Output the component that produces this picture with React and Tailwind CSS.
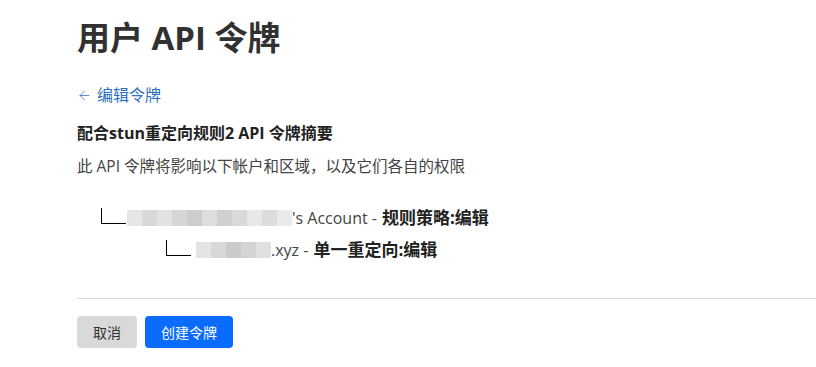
import { ArrowLeft } from 'lucide-react';

const font = { fontFamily: '"Open Sans", "Noto Sans CJK SC", sans-serif' };

function Blur({ cells }) {
  return (
    <span className="inline-flex h-[16px] items-stretch">
      {cells.map((c, i) => (
        <span key={i} className="w-[15px]" style={{ background: c }} />
      ))}
    </span>
  );
}

export default function App() {
  return (
    <div className="h-[367px] w-[816px] overflow-hidden bg-white pl-[77px] text-[#333]" style={font}>
      {/* Header */}
      <h1 className="pt-[16px] text-[33px] font-bold leading-[44px] text-[#313131]">用户 API 令牌</h1>

      <a className="mt-[24px] flex items-center gap-[5px] text-[16px] leading-[22px] text-[#2f6fc1]">
        <ArrowLeft size={15} strokeWidth={1.25} />
        编辑令牌
      </a>

      <h2 className="mt-[16px] text-[16px] font-bold leading-[22px] text-[#222]">配合stun重定向规则2 API 令牌摘要</h2>
      <p className="mt-[11px] text-[15.5px] leading-[22px] text-[#444]">此 API 令牌将影响以下帐户和区域，以及它们各自的权限</p>

      {/* Tree */}
      <div className="mt-[31px] flex items-end">
        <span className="ml-[24px] mb-[4px] h-[16px] w-[25px] border-b border-l border-black" />
        <span className="ml-[1px] flex items-center text-[16px] leading-[20px]">
          <Blur cells={['#e6e6e6', '#d8d8d8', '#e2e2e2', '#d6d6d6', '#cdcdcd', '#dedede', '#d0d0d0', '#d9d9d9', '#e8e8e8', '#dcdcdc', '#eaeaea']} />
          <span className="text-[#444]">'s Account - </span>
          <span className="ml-[5px] text-[17px] font-bold text-[#222]">规则策略:编辑</span>
        </span>
      </div>
      <div className="mt-[12px] flex items-end">
        <span className="ml-[89px] mb-[4px] h-[16px] w-[25px] border-b border-l border-black" />
        <span className="ml-[5px] flex items-center text-[16px] leading-[20px]">
          <Blur cells={['#e4e4e4', '#d8d8d8', '#cacaca', '#d4d4d4', '#e0e0e0']} />
          <span className="text-[#444]">.xyz - </span>
          <span className="ml-[5px] text-[17px] font-bold text-[#222]">单一重定向:编辑</span>
        </span>
      </div>

      <div className="mt-[38px] border-t border-[#d9d9d9]" />

      <div className="mt-[17px] flex gap-[8px] text-[14px]">
        <button className="h-[32px] w-[60px] rounded-[4px] bg-[#d9d9d9] text-[#333]">取消</button>
        <button className="h-[32px] w-[88px] rounded-[4px] bg-[#0a6cff] text-white">创建令牌</button>
      </div>
    </div>
  );
}
